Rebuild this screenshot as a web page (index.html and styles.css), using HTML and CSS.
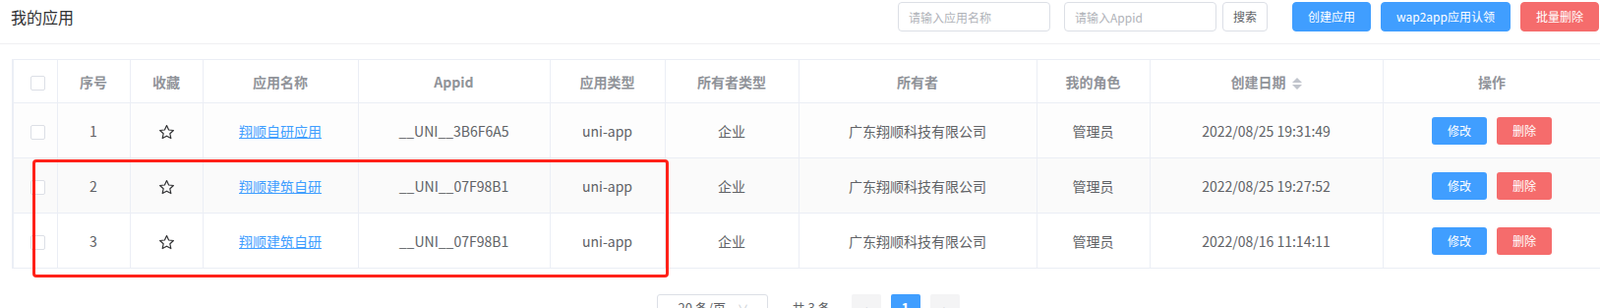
FILE: index.html
```html
<!DOCTYPE html>
<html lang="zh-CN">
<head>
  <meta charset="UTF-8" />
  <title>我的应用</title>
  <link rel="stylesheet" href="styles.css">
</head>
<body>
  <div class="page">
    <!-- top bar: title + search tools -->
    <div class="topbar">
      <h2 class="title">我的应用</h2>
      <div class="tools">
        <input class="search-input" type="text" placeholder="请输入应用名称" />
        <input class="search-input appid-input" type="text" placeholder="请输入Appid" />
        <button class="btn btn-plain btn-search">搜索</button>
        <button class="btn btn-primary btn-create">创建应用</button>
        <button class="btn btn-primary">wap2app应用认领</button>
        <button class="btn btn-danger">批量删除</button>
      </div>
    </div>

    <!-- app list -->
    <div class="table-wrap">
      <table class="app-table">
        <colgroup>
          <col style="width:45px"><col style="width:74px"><col style="width:74px"><col style="width:158px">
          <col style="width:195px"><col style="width:117px"><col style="width:136px"><col style="width:242px">
          <col style="width:115px"><col style="width:237px"><col style="width:222px">
        </colgroup>
        <thead>
          <tr>
            <th><span class="checkbox"></span></th>
            <th>序号</th>
            <th>收藏</th>
            <th>应用名称</th>
            <th>Appid</th>
            <th>应用类型</th>
            <th>所有者类型</th>
            <th>所有者</th>
            <th>我的角色</th>
            <th>创建日期<span class="sort-caret"><i class="up"></i><i class="down"></i></span></th>
            <th>操作</th>
          </tr>
        </thead>
        <tbody id="rows"></tbody>
      </table>
      <div class="mark"></div>
    </div>

    <div class="pagination">
      <span class="page-size">20 条/页<span class="arrow">∨</span></span>
      <span class="total">共 3 条</span>
      <span class="pg-btn">‹</span>
      <span class="pg-btn active">1</span>
      <span class="pg-btn">›</span>
    </div>
  </div>

  <script>
    const apps = [
      { name: '翔顺自研应用', appid: '__UNI__3B6F6A5', date: '2022/08/25 19:31:49' },
      { name: '翔顺建筑自研', appid: '__UNI__07F98B1', date: '2022/08/25 19:27:52' },
      { name: '翔顺建筑自研', appid: '__UNI__07F98B1', date: '2022/08/16 11:14:11' }
    ];

    const star = '<svg class="star" viewBox="0 0 16 16" width="17" height="17"><path d="M8 1.5l1.95 4.15 4.55.5-3.35 3.05.92 4.5L8 11.45l-4.07 2.25.92-4.5L1.5 6.15l4.55-.5z" fill="none" stroke="#303133" stroke-width="1.1" stroke-linejoin="round"/></svg>';

    const tbody = document.getElementById('rows');
    apps.forEach((a, i) => {
      const tr = document.createElement('tr');
      tr.className = 'row-' + (i + 1);
      tr.innerHTML = `
        <td><span class="checkbox"></span></td>
        <td>${i + 1}</td>
        <td>${star}</td>
        <td><a class="app-link" href="#">${a.name}</a></td>
        <td>${a.appid}</td>
        <td>uni-app</td>
        <td>企业</td>
        <td>广东翔顺科技有限公司</td>
        <td>管理员</td>
        <td>${a.date}</td>
        <td><button class="btn-op btn-primary">修改</button><button class="btn-op btn-danger">删除</button></td>
      `;
      tbody.appendChild(tr);
    });
  </script>
</body>
</html>
```

FILE: styles.css
```css
body {
  margin: 0;
  font-family: "Noto Sans CJK SC", "Noto Sans", sans-serif;
  color: #606266;
  background: #fff;
  overflow: hidden;
}

.page {
  width: 1627px;
}

.topbar {
  display: flex;
  align-items: center;
  height: 34px;
  padding: 0 1px 10px 11px;
  border-bottom: 1px solid #f0f0f2;
}

.title {
  margin: 0;
  font-size: 16px;
  font-weight: normal;
  color: #303133;
  line-height: 20px;
}

.tools {
  margin-left: auto;
  display: flex;
  align-items: center;
}

.search-input {
  width: 155px;
  height: 30px;
  box-sizing: border-box;
  border: 1px solid #dcdfe6;
  border-radius: 4px;
  padding: 0 10px;
  font-family: inherit;
  font-size: 12px;
  color: #606266;
  outline: none;
}

.search-input::placeholder {
  color: #b0b3b9;
}

.appid-input {
  margin-left: 14px;
}

.btn {
  height: 30px;
  box-sizing: border-box;
  padding: 0 15px;
  margin-left: 10px;
  border: 1px solid transparent;
  border-radius: 4px;
  font-family: inherit;
  font-size: 12px;
  line-height: 28px;
  color: #fff;
  cursor: pointer;
}

.btn-search {
  margin-left: 6px;
  padding: 0 10px;
}

.btn-create {
  margin-left: 25px;
}

.btn-plain {
  background: #fff;
  border-color: #dcdfe6;
  color: #606266;
}

.btn-primary {
  background: #409eff;
  border-color: #409eff;
}

.btn-danger {
  background: #f56c6c;
  border-color: #f56c6c;
}

.table-wrap {
  position: relative;
  margin: 15px 0 0 12px;
}

.app-table {
  width: 1615px;
  table-layout: fixed;
  border-collapse: collapse;
  border: 1px solid #ebeef5;
  border-left-width: 2px;
  font-size: 14px;
}

.app-table th,
.app-table td {
  border: 1px solid #ebeef5;
  text-align: center;
  padding: 0;
  line-height: 20px;
  white-space: nowrap;
}

.app-table th {
  height: 43px;
  color: #909399;
  font-weight: bold;
}

.app-table td {
  height: 55px;
  color: #606266;
}

.row-1 td {
  background: #fdfdfd;
}

.row-2 td {
  background: #fafafa;
}

.checkbox {
  display: inline-block;
  width: 15px;
  height: 15px;
  box-sizing: border-box;
  border: 1px solid #dcdfe6;
  border-radius: 2px;
  background: #fff;
  vertical-align: middle;
  margin-left: 5px;
}

.star {
  display: inline-block;
  vertical-align: middle;
}

.app-link {
  color: #409eff;
  text-decoration: underline;
}

.sort-caret {
  display: inline-flex;
  flex-direction: column;
  vertical-align: middle;
  margin-left: 6px;
  gap: 2px;
}

.sort-caret i {
  width: 0;
  height: 0;
  border-left: 5px solid transparent;
  border-right: 5px solid transparent;
}

.sort-caret .up {
  border-bottom: 5px solid #c0c4cc;
}

.sort-caret .down {
  border-top: 5px solid #c0c4cc;
}

.btn-op {
  width: 56px;
  height: 28px;
  border: none;
  border-radius: 3px;
  font-family: inherit;
  font-size: 12px;
  color: #fff;
  cursor: pointer;
  vertical-align: middle;
}

.btn-op + .btn-op {
  margin-left: 10px;
}

.mark {
  position: absolute;
  left: 21px;
  top: 102px;
  width: 647px;
  height: 120px;
  box-sizing: border-box;
  border: 3px solid #ff2119;
  border-radius: 4px;
}

.pagination {
  display: flex;
  justify-content: center;
  align-items: center;
  width: 1615px;
  margin: 26px 0 0 17px;
  font-size: 13px;
}

.page-size {
  width: 113px;
  height: 28px;
  box-sizing: border-box;
  border: 1px solid #dcdfe6;
  border-radius: 3px;
  padding-left: 20px;
  line-height: 26px;
  color: #606266;
}

.page-size .arrow {
  margin-left: 12px;
  font-size: 11px;
  color: #c0c4cc;
}

.total {
  margin: 0 16px 0 24px;
  line-height: 28px;
}

.pg-btn {
  width: 30px;
  height: 28px;
  margin: 0 5px;
  border-radius: 2px;
  background: #f4f4f5;
  color: #c0c4cc;
  text-align: center;
  line-height: 28px;
  font-size: 14px;
}

.pg-btn.active {
  background: #409eff;
  color: #fff;
  font-weight: bold;
}
```
